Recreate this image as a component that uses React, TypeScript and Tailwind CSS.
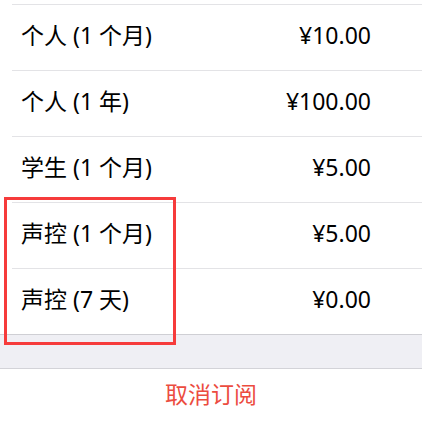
import React from "react";

interface Plan {
  name: string;
  price: string;
}

const plans: Plan[] = [
  { name: "个人 (1 个月)", price: "¥10.00" },
  { name: "个人 (1 年)", price: "¥100.00" },
  { name: "学生 (1 个月)", price: "¥5.00" },
  { name: "声控 (1 个月)", price: "¥5.00" },
  { name: "声控 (7 天)", price: "¥0.00" },
];

export default function App() {
  return (
    <div
      className="relative w-[422px] h-[422px] overflow-hidden bg-white text-black"
      style={{ fontFamily: '"Noto Sans", "Noto Sans CJK SC", sans-serif' }}
    >
      {/* tail of the previous row */}
      <div className="h-[4px] ml-[12px] border-b border-[#e3e3e6] box-content" />

      {plans.map((plan, i) => {
        const last = i === plans.length - 1;
        return (
          <div
            key={i}
            className={`flex items-center justify-between h-[65px] box-content border-b pr-[51px] ${
              last ? "border-[#cfcfd4] pl-[21px]" : "border-[#e3e3e6] ml-[12px] pl-[9px]"
            }`}
          >
            <span className="text-[23px] leading-none -mt-[5px]">{plan.name}</span>
            <span className="text-[23px] leading-none -mt-[5px]">{plan.price}</span>
          </div>
        );
      })}

      <div className="h-[33px] bg-[#efeff4] border-b border-[#d3d3d8] box-content" />

      <div className="flex justify-center pt-[14px]">
        <span className="text-[23px] leading-none text-[#ec4c3f]">取消订阅</span>
      </div>

      {/* highlight box */}
      <div className="absolute left-[4px] top-[197px] w-[172px] h-[148px] border-[3px] border-[#f63b3b]" />
    </div>
  );
}
